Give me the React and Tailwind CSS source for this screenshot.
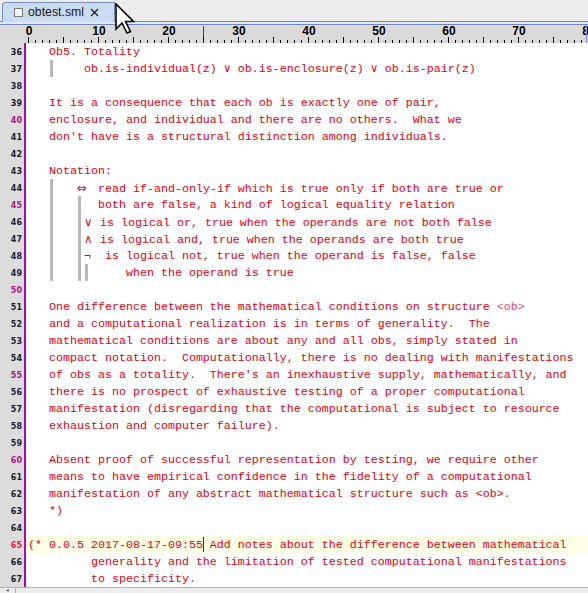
const RED = 'text-[#e0000e]'

const lines = [
  { n: 36, text: '   Ob5. Totality' },
  { n: 37, text: '        ob.is-individual(z) ∨ ob.is-enclosure(z) ∨ ob.is-pair(z)', guides: ['left-[24px]'] },
  { n: 38, text: '' },
  { n: 39, text: '   It is a consequence that each ob is exactly one of pair,' },
  { n: 40, text: '   enclosure, and individual and there are no others.  What we' },
  { n: 41, text: "   don't have is a structural distinction among individuals." },
  { n: 42, text: '' },
  { n: 43, text: '   Notation:' },
  { n: 44, sym: '⇔', pre: '       ', box: 'w-[21px]', text: 'read if-and-only-if which is true only if both are true or', guides: ['left-[24px]'] },
  { n: 45, text: '          both are false, a kind of logical equality relation', guides: ['left-[24px]', 'left-[52px]'] },
  { n: 46, sym: '∨', pre: '        ', box: 'w-[16px]', text: 'is logical or, true when the operands are not both false', guides: ['left-[24px]', 'left-[52px]'] },
  { n: 47, sym: '∧', pre: '        ', box: 'w-[16px]', text: 'is logical and, true when the operands are both true', guides: ['left-[24px]', 'left-[52px]'] },
  { n: 48, text: '        ¬  is logical not, true when the operand is false, false', guides: ['left-[24px]', 'left-[52px]'] },
  { n: 49, text: '              when the operand is true', guides: ['left-[24px]', 'left-[52px]', 'left-[59px]'] },
  { n: 50, text: '' },
  { n: 51, text: '   One difference between the mathematical conditions on structure ', tail: '<ob>' },
  { n: 52, text: '   and a computational realization is in terms of generality.  The' },
  { n: 53, text: '   mathematical conditions are about any and all obs, simply stated in' },
  { n: 54, text: '   compact notation.  Computationally, there is no dealing with manifestations' },
  { n: 55, text: "   of obs as a totality.  There's an inexhaustive supply, mathematically, and" },
  { n: 56, text: '   there is no prospect of exhaustive testing of a proper computational' },
  { n: 57, text: '   manifestation (disregarding that the computational is subject to resource' },
  { n: 58, text: '   exhaustion and computer failure).' },
  { n: 59, text: '' },
  { n: 60, text: '   Absent proof of successful representation by testing, we require other' },
  { n: 61, text: '   means to have empirical confidence in the fidelity of a computational' },
  { n: 62, text: '   manifestation of any abstract mathematical structure such as <ob>.' },
  { n: 63, text: '   *)' },
  { n: 64, text: '' },
  { n: 65, text: '(* 0.0.5 2017-08-17-09:55', after: ' Add notes about the difference between mathematical', current: true },
  { n: 66, text: '         generality and the limitation of tested computational manifestations' },
  { n: 67, text: '         to specificity.' },
]

function numColor(l) {
  if (l.current) return 'text-[#e8204a]'
  if (l.n % 5 === 0) return 'text-[#a0207a]'
  return 'text-[#1c1c2c]'
}

function Row({ l }) {
  return (
    <div className="flex h-[17px]">
      <div
        className={`w-[24px] bg-[#dcdcdc] pr-[2px] pt-[1px] text-right text-[8px] font-bold leading-[17px] ${numColor(l)}`}
        style={{ fontFamily: '"DejaVu Sans", sans-serif' }}
      >
        {l.n}
      </div>
      <div className="w-[2px] bg-[#a010a0]" />
      <div
        className={`relative flex-1 whitespace-pre pl-[2px] pt-[1px] text-[11.667px] leading-[17px] ${RED} ${
          l.current ? 'bg-[#fffde4]' : 'bg-white'
        }`}
      >
        {(l.guides || []).map((g) => (
          <div key={g} className={`absolute top-0 bottom-0 w-[3px] bg-[#b8b8b8] ${g}`} />
        ))}
        {l.sym ? (
          <>
            {l.pre}
            <span className={`inline-block ${l.box}`} style={{ fontFamily: '"DejaVu Sans", sans-serif' }}>
              {l.sym}
            </span>
            {l.text}
          </>
        ) : (
          l.text
        )}
        {l.tail && <span className="text-[#ee4468]">{l.tail}</span>}
        {l.current && (
          <>
            <span className="relative inline-block h-[15px] w-0 align-middle">
              <span className="absolute left-0 top-0 h-[15px] w-px bg-[#a00000]" />
            </span>
            {l.after}
          </>
        )}
      </div>
    </div>
  )
}

function Ruler() {
  const ticks = Array.from({ length: 81 }, (_, i) => i)
  return (
    <div className="h-[18px] bg-[#dadada]">
      <svg width="588" height="18" className="block">
        {ticks.map((i) => {
          const x = 28 + i * 7 + 0.5
          return <line key={i} x1={x} x2={x} y1={i % 5 === 0 ? 12 : 15} y2={18} stroke="#000" strokeWidth="1" />
        })}
        {ticks
          .filter((i) => i % 10 === 0)
          .map((i) => (
            <text
              key={i}
              x={29 + i * 7}
              y={10}
              textAnchor="middle"
              fontFamily="Liberation Sans, Arial, sans-serif"
              fontWeight="bold"
              fontSize="12"
              fill="#000"
            >
              {i}
            </text>
          ))}
        <line x1="203.5" x2="203.5" y1="1" y2="12" stroke="#e00000" />
        <line x1="586.5" x2="586.5" y1="0" y2="18" stroke="#8a8ae8" />
      </svg>
    </div>
  )
}

export default function App() {
  return (
    <div
      className="relative flex h-[593px] w-[588px] flex-col overflow-hidden bg-white"
      style={{ fontFamily: '"Liberation Mono", "Courier New", monospace' }}
    >
      {/* tab strip */}
      <div className="flex h-[21px] items-end bg-[#ececec] pl-[2px]">
        <div
          className="relative z-10 -mb-px flex h-[20px] w-[113px] items-center rounded-tl-[3px] border border-b-0 border-[#7a90bc] bg-[#c9dcf1] pl-[11px] text-[12.3px] text-[#1a1a1a]"
          style={{ fontFamily: '"Liberation Sans", Arial, sans-serif' }}
        >
          <span className="mr-[5px] inline-block h-[9px] w-[9px] border border-[#7a7a7a] bg-[#f4f4f4]" />
          <span>obtest.sml</span>
          <svg width="9" height="9" viewBox="0 0 9 9" className="ml-[6px]">
            <path d="M1 1 L8 8 M8 1 L1 8" stroke="#222" strokeWidth="1.4" />
          </svg>
        </div>
      </div>
      <div className="h-[4px] border-y border-[#7088b8] bg-[#dfe8f4]" />
      <Ruler />
      <div className="flex flex-col">
        {lines.map((l) => (
          <Row key={l.n} l={l} />
        ))}
      </div>
      {/* horizontal scrollbar */}
      <div className="flex h-[6px] border-t border-[#b4b4b4] bg-[#ededed]">
        <div className="flex w-[16px] items-start justify-center border-r border-[#b4b4b4] text-[6px] leading-[6px] text-[#333]">
          ◂
        </div>
      </div>
      {/* mouse pointer */}
      <svg width="22" height="32" viewBox="0 0 22 32" className="absolute left-[115px] top-[3px]">
        <path
          d="M1 1 L1 26 L7 20 L12 30 L15.5 28.5 L10.5 18.5 L18.5 18.5 Z"
          fill="#fff"
          stroke="#000"
          strokeWidth="1.6"
          strokeLinejoin="miter"
        />
      </svg>
    </div>
  )
}
